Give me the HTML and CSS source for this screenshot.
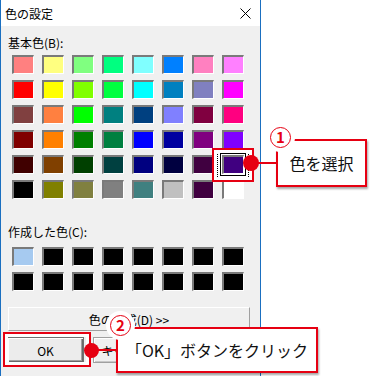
FILE: index.html
```html
<!DOCTYPE html>
<html lang="ja">
  <head>
    <meta charset="utf-8" />
    <title>色の設定</title>
    <link rel="stylesheet" href="styles.css">
  </head>
  <body>
    <div class="page">
      <!-- Color dialog -->
      <div class="dialog">
        <div class="titlebar">
          <span class="title">色の設定</span>
          <svg class="close-icon" width="11" height="11" viewBox="0 0 11 11" xmlns="http://www.w3.org/2000/svg">
            <path d="M0.5 0.5L10.5 10.5M10.5 0.5L0.5 10.5" stroke="#000" stroke-width="1" fill="none" />
          </svg>
        </div>

        <div class="dialog-body">
          <div class="section-label">基本色(B):</div>
          <div class="swatch-grid">
            <div class="swatch" style="background:#ff8080"></div>
            <div class="swatch" style="background:#ffff80"></div>
            <div class="swatch" style="background:#80ff80"></div>
            <div class="swatch" style="background:#00ff80"></div>
            <div class="swatch" style="background:#80ffff"></div>
            <div class="swatch" style="background:#0080ff"></div>
            <div class="swatch" style="background:#ff80c0"></div>
            <div class="swatch" style="background:#ff80ff"></div>

            <div class="swatch" style="background:#ff0000"></div>
            <div class="swatch" style="background:#ffff00"></div>
            <div class="swatch" style="background:#80ff00"></div>
            <div class="swatch" style="background:#00ff40"></div>
            <div class="swatch" style="background:#00ffff"></div>
            <div class="swatch" style="background:#0080c0"></div>
            <div class="swatch" style="background:#8080c0"></div>
            <div class="swatch" style="background:#ff00ff"></div>

            <div class="swatch" style="background:#804040"></div>
            <div class="swatch" style="background:#ff8040"></div>
            <div class="swatch" style="background:#00ff00"></div>
            <div class="swatch" style="background:#008080"></div>
            <div class="swatch" style="background:#004080"></div>
            <div class="swatch" style="background:#8080ff"></div>
            <div class="swatch" style="background:#800040"></div>
            <div class="swatch" style="background:#ff0080"></div>

            <div class="swatch" style="background:#800000"></div>
            <div class="swatch" style="background:#ff8000"></div>
            <div class="swatch" style="background:#008000"></div>
            <div class="swatch" style="background:#008040"></div>
            <div class="swatch" style="background:#0000ff"></div>
            <div class="swatch" style="background:#0000a0"></div>
            <div class="swatch" style="background:#800080"></div>
            <div class="swatch" style="background:#8000ff"></div>

            <div class="swatch" style="background:#400000"></div>
            <div class="swatch" style="background:#804000"></div>
            <div class="swatch" style="background:#004000"></div>
            <div class="swatch" style="background:#004040"></div>
            <div class="swatch" style="background:#000080"></div>
            <div class="swatch" style="background:#000040"></div>
            <div class="swatch" style="background:#400040"></div>
            <div class="swatch selected" style="background:#400080"></div>

            <div class="swatch" style="background:#000000"></div>
            <div class="swatch" style="background:#808000"></div>
            <div class="swatch" style="background:#808040"></div>
            <div class="swatch" style="background:#808080"></div>
            <div class="swatch" style="background:#408080"></div>
            <div class="swatch" style="background:#c0c0c0"></div>
            <div class="swatch" style="background:#400040"></div>
            <div class="swatch" style="background:#ffffff"></div>
          </div>

          <div class="section-label custom-label">作成した色(C):</div>
          <div class="swatch-grid custom-grid">
            <div class="swatch" style="background:#a6caf0"></div>
            <div class="swatch"></div>
            <div class="swatch"></div>
            <div class="swatch"></div>
            <div class="swatch"></div>
            <div class="swatch"></div>
            <div class="swatch"></div>
            <div class="swatch"></div>
            <div class="swatch"></div>
            <div class="swatch"></div>
            <div class="swatch"></div>
            <div class="swatch"></div>
            <div class="swatch"></div>
            <div class="swatch"></div>
            <div class="swatch"></div>
            <div class="swatch"></div>
          </div>

          <button class="define-button">色の作成(D) &gt;&gt;</button>

          <div class="actions">
            <button class="button default">OK</button>
            <button class="button">キャンセル</button>
            <button class="button">ヘルプ</button>
          </div>
        </div>
      </div>

      <!-- Annotations -->
      <div class="mark mark-swatch"></div>
      <div class="leader leader-select"></div>
      <div class="dot dot-select"></div>
      <div class="callout callout-select">
        <span class="num">1</span>
        色を選択
      </div>

      <div class="mark mark-ok"></div>
      <div class="leader leader-ok"></div>
      <div class="dot dot-ok"></div>
      <div class="callout callout-ok">
        <span class="num">2</span>
        「OK」ボタンをクリック
      </div>
    </div>
  </body>
</html>
```

FILE: styles.css
```css
body {
  margin: 0;
  background: #fff;
  font-family: "Noto Sans CJK JP", "Noto Sans", sans-serif;
  color: #000;
}
.page {
  position: relative;
  width: 370px;
  height: 376px;
  overflow: hidden;
}
.dialog {
  width: 261px;
  height: 376px;
  box-sizing: border-box;
  border-left: 1px solid #1a6fc0;
  border-right: 1px solid #1a6fc0;
  display: flex;
  flex-direction: column;
}
.titlebar {
  height: 26px;
  background: #fff;
  display: flex;
  align-items: center;
  justify-content: space-between;
  padding: 0 9px 0 4px;
  flex-shrink: 0;
}
.title {
  font-size: 12px;
}
.close-icon {
  width: 11px;
  height: 11px;
}
.dialog-body {
  flex: 1;
  background: #f0f0f0;
  padding: 8px 0 0 7px;
}
.section-label {
  font-size: 12px;
  line-height: 17px;
}
.custom-label {
  margin-top: 24px;
}
.swatch-grid {
  display: grid;
  grid-template-columns: repeat(8, 22px);
  grid-auto-rows: 19px;
  column-gap: 8px;
  row-gap: 6px;
  margin: 4px 0 0 4px;
}
.custom-grid {
  margin-top: 7px;
}
.swatch {
  box-sizing: border-box;
  background: #000;
  border-style: solid;
  border-width: 2px 1px 1px 2px;
  border-color: #7a7a7a #fff #fff #7a7a7a;
}
.swatch.selected {
  box-shadow: 0 0 0 1px #fff, 0 0 0 2px #000, 0 0 0 6px #fff;
  outline: 1px dotted #000;
  outline-offset: 4px;
}
.define-button {
  display: block;
  width: 242px;
  height: 24px;
  margin-top: 16px;
  padding: 0;
  background: #f0f0f0;
  border: 1px solid;
  border-color: #fff #a0a0a0 #a0a0a0 #fff;
  font-family: inherit;
  font-size: 12px;
  color: #000;
}
.actions {
  display: flex;
  gap: 9px;
  margin: 6px 0 0 -1px;
}
.button {
  width: 77px;
  height: 26px;
  flex-shrink: 0;
  padding: 0;
  background: #f0f0f0;
  border: 1px solid #a0a0a0;
  box-shadow: inset 1px 1px 0 #fff, inset -1px -1px 0 #c8c8c8;
  font-family: inherit;
  font-size: 12px;
  color: #000;
}
.button.default {
  background: #ececec;
  border-color: #707070;
  box-shadow: inset 1px 1px 0 #fff, inset -1px -1px 0 #696969, inset -2px -2px 0 #a0a0a0;
}

/* annotation overlays */
.mark {
  position: absolute;
  box-sizing: border-box;
  border: 2px solid #e60012;
  box-shadow: inset 0 0 0 3px #fff;
}
.mark-swatch {
  left: 212px;
  top: 148px;
  width: 42px;
  height: 34px;
}
.mark-ok {
  left: 3px;
  top: 332px;
  width: 88px;
  height: 35px;
}
.leader {
  position: absolute;
  height: 2px;
  background: #e60012;
}
.leader-select {
  left: 251px;
  top: 162px;
  width: 26px;
}
.leader-ok {
  left: 91px;
  top: 349px;
  width: 26px;
}
.dot {
  position: absolute;
  border-radius: 50%;
  background: #e60012;
}
.dot-select {
  left: 243px;
  top: 155px;
  width: 16px;
  height: 16px;
}
.dot-ok {
  left: 84px;
  top: 343px;
  width: 15px;
  height: 15px;
}
.callout {
  position: absolute;
  box-sizing: border-box;
  border: 2px solid #e60012;
  background: #fff;
  box-shadow: 1px 2px 2px rgba(0, 0, 0, 0.35);
  display: flex;
  align-items: center;
  justify-content: center;
  font-size: 16px;
  color: #111;
}
.callout-select {
  left: 276px;
  top: 139px;
  width: 91px;
  height: 48px;
}
.callout-ok {
  left: 116px;
  top: 327px;
  width: 202px;
  height: 46px;
}
.num {
  position: absolute;
  left: -8px;
  top: -14px;
  width: 21px;
  height: 21px;
  box-sizing: border-box;
  border: 1.5px solid #e60012;
  border-radius: 50%;
  background: #fff;
  box-shadow: 0 0 0 4px #fff;
  color: #e60012;
  font-size: 15px;
  font-weight: 700;
  line-height: 18px;
  text-align: center;
}
```
